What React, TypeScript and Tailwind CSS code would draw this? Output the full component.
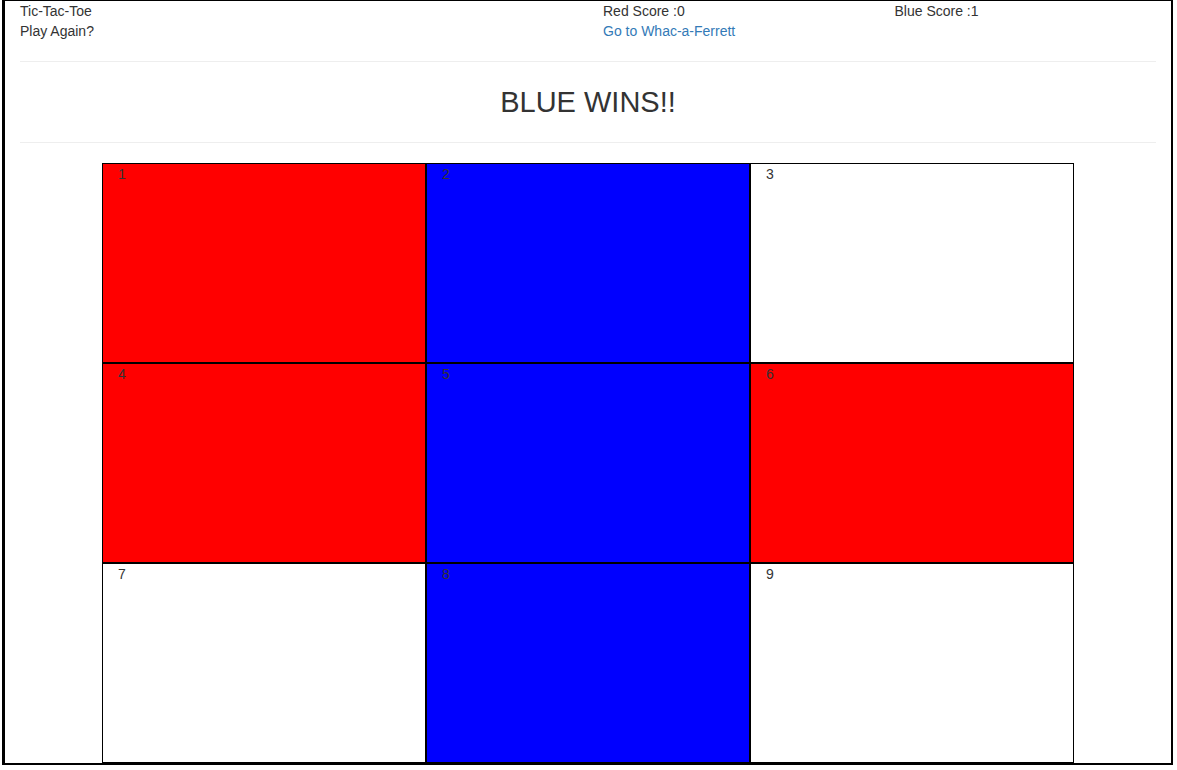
const cells: ("red" | "blue" | null)[] = [
  "red",
  "blue",
  null,
  "red",
  "blue",
  "red",
  null,
  "blue",
  null,
];

const cellBg = (owner: "red" | "blue" | null) => {
  if (owner === "red") return "bg-[#ff0000]";
  if (owner === "blue") return "bg-[#0000ff]";
  return "bg-white";
};

const App = () => {
  return (
    <div
      className="bg-white text-[14px] leading-[20px] text-[#333]"
      style={{ fontFamily: '"Liberation Sans", Arial, sans-serif' }}
    >
      <div className="ml-[2px] w-[1171px] border-l-[3px] border-r-2 border-t border-b-2 border-black">
        <div className="px-[15px]">
          <div className="-mx-[15px] grid grid-cols-4">
            <div className="px-[15px]">
              <div>Tic-Tac-Toe</div>
              <div className="cursor-pointer">Play Again?</div>
            </div>
            <div className="px-[15px]" />
            <div className="px-[15px]">
              <div>Red Score :0</div>
              <a href="#" className="text-[#337ab7]">
                Go to Whac-a-Ferrett
              </a>
            </div>
            <div className="px-[15px]">
              <div>Blue Score :1</div>
            </div>
          </div>

          <hr className="mt-[20px] border-t border-[#eee]" />
          <div className="flex h-[80px] items-center justify-center">
            <h2 className="text-[29px] leading-[33px] font-normal">BLUE WINS!!</h2>
          </div>
          <hr className="mb-[20px] border-t border-[#eee]" />

          <div className="mx-auto grid w-[972px] grid-cols-3">
            {cells.map((owner, i) => (
              <div
                key={i}
                className={`h-[200px] border border-black px-[15px] ${cellBg(owner)}`}
              >
                {i + 1}
              </div>
            ))}
          </div>
        </div>
      </div>
    </div>
  );
};

export default App;
